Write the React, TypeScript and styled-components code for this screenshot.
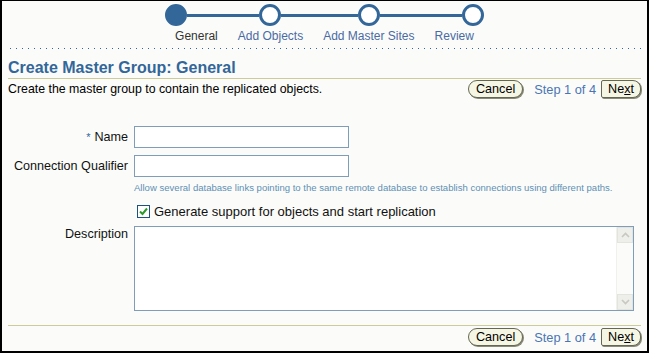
import { createGlobalStyle, styled } from "styled-components";

const GlobalStyle = createGlobalStyle`
	body {
		margin: 0;
		background: #ffffff;
	}
`;

const Frame = styled.div`
	width: 649px;
	height: 353px;
	box-sizing: border-box;
	border-top: 1px solid #000;
	border-left: 2px solid #000;
	border-right: 2px solid #000;
	border-bottom: 2px solid #000;
	background: #fbfcf9;
	display: flex;
	flex-direction: column;
	padding: 0 6px 0 6px;
	font-family: "Liberation Sans", Arial, sans-serif;
	font-size: 12.6px;
	color: #000;
`;

const Train = styled.div`
	display: flex;
	justify-content: center;
	padding-top: 3px;
	font-size: 12px;
`;

const Step = styled.div`
	display: flex;
	flex-direction: column;
	align-items: stretch;
`;

const StepTrack = styled.div`
	display: flex;
	align-items: center;
	height: 22px;
`;

const Rail = styled.div<{ hidden?: boolean }>`
	flex: 1;
	height: 3px;
	background: ${({ hidden }) => (hidden ? "transparent" : "#336699")};
`;

const Dot = styled.div<{ active?: boolean }>`
	width: 22px;
	height: 22px;
	box-sizing: border-box;
	border-radius: 50%;
	border: 3px solid #336699;
	background: ${({ active }) => (active ? "#336699" : "#ffffff")};
`;

const StepLabel = styled.span<{ active?: boolean }>`
	padding: 3px 10px 0;
	line-height: 14px;
	white-space: nowrap;
	color: ${({ active }) => (active ? "#333333" : "#4a6aa5")};
`;

const Dotted = styled.div`
	margin-top: 5px;
	height: 1px;
	background-image: linear-gradient(to right, #336699 1px, transparent 1px);
	background-size: 6px 1px;
	background-position: 2px 0;
`;

const Title = styled.h1`
	margin: 9px 0 0;
	font-size: 16px;
	font-weight: bold;
	line-height: 20px;
	color: #336699;
	border-bottom: 1px solid #cccc99;
`;

const ActionRow = styled.div`
	display: flex;
	align-items: center;
	justify-content: space-between;
	height: 20px;
`;

const Intro = styled.span`
	font-size: 12.35px;
`;

const Buttons = styled.div`
	display: flex;
	align-items: center;
`;

const Button = styled.button<{ shape?: "pill" | "next" }>`
	height: 18px;
	box-sizing: border-box;
	padding: 0 ${({ shape }) => (shape === "next" ? "6px" : "7px")};
	font-family: "Liberation Sans", Arial, sans-serif;
	font-size: 12.6px;
	color: #000;
	background: #f6f6e4;
	border: 1px solid #666655;
	border-radius: ${({ shape }) => (shape === "next" ? "2px 8px 8px 2px" : "9px")};
	box-shadow: 1px 1px 0 #8a8a78;
	line-height: 14px;
	cursor: pointer;
`;

const StepText = styled.span`
	margin: 0 5px 0 11px;
	color: #4a75b5;
	font-size: 12.8px;
`;

const Form = styled.div`
	display: grid;
	grid-template-columns: 120px 500px;
	column-gap: 6px;
	row-gap: 7px;
	margin-top: 27px;
	align-items: center;
`;

const Label = styled.label<{ top?: boolean }>`
	text-align: right;
	white-space: nowrap;
	color: #111;
	align-self: ${({ top }) => (top ? "start" : "center")};
	padding-top: ${({ top }) => (top ? "1px" : "0")};
`;

const Required = styled.span`
	color: #336699;
	font-size: 11px;
	margin-right: 4px;
`;

const TextInput = styled.input`
	width: 215px;
	height: 22px;
	box-sizing: border-box;
	border: 1px solid #7f9db9;
	background: #ffffff;
	padding: 1px 3px;
	font-family: "Liberation Sans", Arial, sans-serif;
	font-size: 12px;
`;

const FieldCell = styled.div`
	grid-column: 2;
	display: flex;
	flex-direction: column;
`;

const Hint = styled.span`
	font-size: 9.55px;
	color: #5f8fb5;
	margin-top: -2px;
	white-space: nowrap;
	line-height: 11px;
`;

const CheckRow = styled.label`
	display: flex;
	align-items: center;
	gap: 4px;
	padding-left: 3px;
	margin-top: 11px;
	color: #111;
	font-size: 13px;
	white-space: nowrap;
`;

const CheckBox = styled.span`
	width: 13px;
	height: 13px;
	box-sizing: border-box;
	border: 1px solid #1c5180;
	background: #ffffff;
	display: flex;
	align-items: center;
	justify-content: center;
`;

const AreaBox = styled.div`
	display: flex;
	width: 500px;
	height: 85px;
	box-sizing: border-box;
	border: 1px solid #7f9db9;
	background: #ffffff;
`;

const Area = styled.textarea`
	flex: 1;
	border: none;
	outline: none;
	resize: none;
	padding: 2px;
	font-family: "Liberation Sans", Arial, sans-serif;
	font-size: 12px;
	background: transparent;
`;

const ScrollTrack = styled.div`
	width: 16px;
	display: flex;
	flex-direction: column;
	justify-content: space-between;
	border-left: 1px solid #f0f0ec;
	background: #fbfbf9;
`;

const ScrollButton = styled.div`
	height: 16px;
	background: #eeeeea;
	border: 1px solid #e4e4de;
	box-sizing: border-box;
	display: flex;
	align-items: center;
	justify-content: center;
`;

const Footer = styled.div`
	margin-top: auto;
	margin-bottom: 5px;
	border-top: 1px solid #cccc99;
	padding-top: 2px;
	display: flex;
	justify-content: flex-end;
`;

const steps = ["General", "Add Objects", "Add Master Sites", "Review"];

function Chevron({ up }: { up?: boolean }) {
	return (
		<svg width="9" height="6" viewBox="0 0 9 6">
			<path
				d={up ? "M1 5 L4.5 1.5 L8 5" : "M1 1 L4.5 4.5 L8 1"}
				fill="none"
				stroke="#c8c8c0"
				strokeWidth="1.6"
			/>
		</svg>
	);
}

function NavButtons() {
	return (
		<Buttons>
			<Button shape="pill">Cancel</Button>
			<StepText>Step 1 of 4</StepText>
			<Button shape="next">
				Ne<u>x</u>t
			</Button>
		</Buttons>
	);
}

export default function App() {
	return (
		<>
			<GlobalStyle />
			<Frame>
				<Train>
					{steps.map((s, i) => (
						<Step key={s}>
							<StepTrack>
								<Rail hidden={i === 0} />
								<Dot active={i === 0} />
								<Rail hidden={i === steps.length - 1} />
							</StepTrack>
							<StepLabel active={i === 0}>{s}</StepLabel>
						</Step>
					))}
				</Train>
				<Dotted />
				<Title>Create Master Group: General</Title>
				<ActionRow>
					<Intro>Create the master group to contain the replicated objects.</Intro>
					<NavButtons />
				</ActionRow>
				<Form>
					<Label>
						<Required>*</Required>Name
					</Label>
					<TextInput />
					<Label>Connection Qualifier</Label>
					<FieldCell>
						<TextInput />
					</FieldCell>
					<FieldCell>
						<Hint>
							Allow several database links pointing to the same remote database to establish connections using different paths.
						</Hint>
						<CheckRow>
							<CheckBox>
								<svg width="9" height="9" viewBox="0 0 9 9">
									<path d="M1 4.5 L3.5 7 L8 1.5" fill="none" stroke="#2a9a2a" strokeWidth="2" />
								</svg>
							</CheckBox>
							Generate support for objects and start replication
						</CheckRow>
					</FieldCell>
					<Label top>Description</Label>
					<AreaBox>
						<Area />
						<ScrollTrack>
							<ScrollButton>
								<Chevron up />
							</ScrollButton>
							<ScrollButton>
								<Chevron />
							</ScrollButton>
						</ScrollTrack>
					</AreaBox>
				</Form>
				<Footer>
					<NavButtons />
				</Footer>
			</Frame>
		</>
	);
}
